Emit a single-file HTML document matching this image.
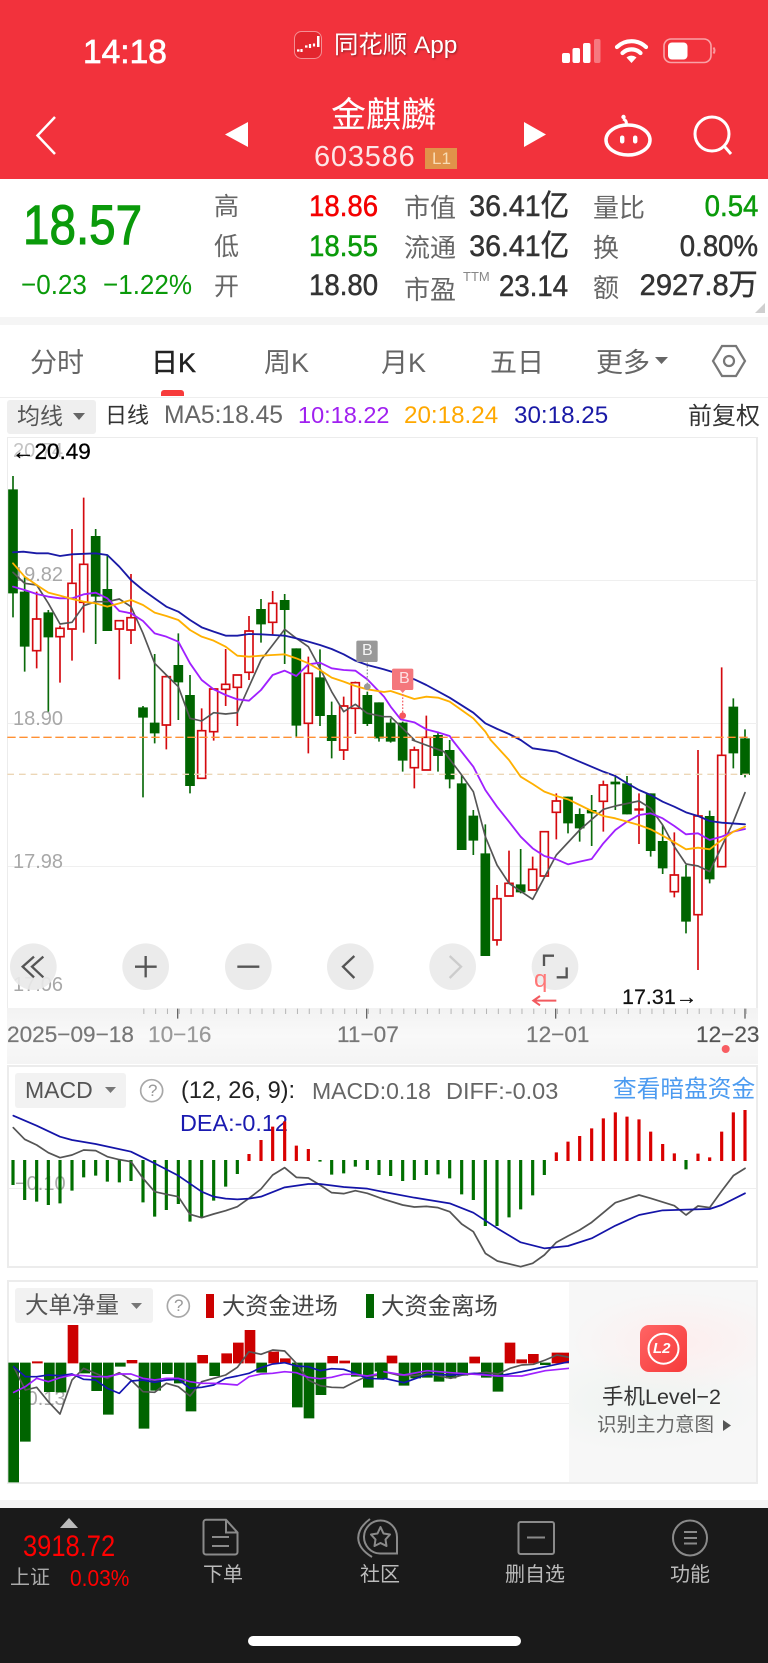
<!DOCTYPE html>
<html lang="zh"><head><meta charset="utf-8"><title>金麒麟</title>
<style>
html,body{margin:0;padding:0;background:#fff}
#p{position:relative;width:768px;height:1663px;overflow:hidden;background:#fff;font-family:"Liberation Sans","Noto Sans CJK SC",sans-serif;color:#333}
.t{position:absolute;white-space:nowrap;line-height:1}
.b{position:absolute}
.l{transform-origin:0 50%}.r{transform-origin:100% 50%}
.lb{color:#666;font-size:25px}
.v{font-size:30px;-webkit-text-stroke:.5px currentColor;transform:scaleX(.92)}
.g{color:#0a9a0a}.c{color:#fff}
.ax{color:#a8a8a8;font-size:20px}
.dt{color:#777;font-size:22.6px;-webkit-text-stroke:.2px currentColor}
svg{position:absolute;left:0;top:0}
.nav{color:#bbb;font-size:20px}
</style></head><body><div id="p">

<!-- header + info -->
<div class="b" style="left:0;top:0;width:768px;height:179px;background:#f2323c"></div>
<div class="b" style="left:0;top:317px;width:768px;height:8px;background:#f5f5f5"></div>
<div class="b" style="left:0;top:397px;width:768px;height:1px;background:#eee"></div>
<div class="b" style="left:161px;top:390px;width:23px;height:6px;border-radius:3px 3px 0 0;background:#f73b3b"></div>

<div class="t c" style="left:83px;top:36px;font-size:33.500px;-webkit-text-stroke:.7px #fff">14:18</div>
<div class="t c" style="left:334px;top:34px;font-size:24.400px;text-shadow:1px 1px 2px rgba(0,0,0,.4)">同花顺 App</div>
<div class="t c" style="left:331px;top:98px;font-size:35px">金麒麟</div>
<div class="t c" style="left:314px;top:143px;font-size:29px;letter-spacing:.8px;color:#fde6e7">603586</div>
<div class="b" style="left:425px;top:148px;width:32px;height:21px;background:#e0934a"></div>
<div class="t" style="left:432px;top:150px;font-size:17px;color:#f8dcb4">L1</div>

<!-- quote block -->
<div class="t g l" style="left:23px;top:197px;font-size:56px;-webkit-text-stroke:1.1px #0a9a0a;transform:scaleX(.85)">18.57</div>
<div class="t g l" style="left:21px;top:271px;font-size:28px;transform:scaleX(.93)">−0.23</div>
<div class="t g l" style="left:103px;top:271px;font-size:28px;transform:scaleX(.93)">−1.22%</div>

<div class="t lb" style="left:214px;top:195px">高</div>
<div class="t lb" style="left:214px;top:235px">低</div>
<div class="t lb" style="left:214px;top:275px">开</div>
<div class="t v r" style="right:390px;top:192px;color:#f40000">18.86</div>
<div class="t v r g" style="right:390px;top:232px">18.55</div>
<div class="t v r" style="right:390px;top:271px">18.80</div>

<div class="t lb" style="left:404px;top:195px;font-size:26px">市值</div>
<div class="t lb" style="left:404px;top:235px;font-size:26px">流通</div>
<div class="t lb" style="left:404px;top:277px;font-size:26px">市盈</div>
<div class="t" style="left:463px;top:270px;font-size:13px;color:#888">TTM</div>
<div class="t v r" style="right:199px;top:192px;font-size:30px;transform:scaleX(.95)">36.41亿</div>
<div class="t v r" style="right:199px;top:232px;font-size:30px;transform:scaleX(.95)">36.41亿</div>
<div class="t v r" style="right:200px;top:272px">23.14</div>

<div class="t lb" style="left:593px;top:195px;font-size:26px">量比</div>
<div class="t lb" style="left:593px;top:235px;font-size:26px">换</div>
<div class="t lb" style="left:593px;top:275px;font-size:26px">额</div>
<div class="t v r g" style="right:10px;top:192px">0.54</div>
<div class="t v r" style="right:10px;top:232px">0.80%</div>
<div class="t v r" style="right:10px;top:271px;font-size:30px;transform:scaleX(.97)">2927.8万</div>

<!-- tabs -->
<div class="t" style="left:30px;top:350px;font-size:27px;color:#666">分时</div>
<div class="t" style="left:151px;top:350px;font-size:27px;color:#222;-webkit-text-stroke:.4px #222">日K</div>
<div class="t" style="left:264px;top:350px;font-size:27px;color:#666">周K</div>
<div class="t" style="left:381px;top:350px;font-size:27px;color:#666">月K</div>
<div class="t" style="left:490px;top:350px;font-size:27px;color:#666">五日</div>
<div class="t" style="left:596px;top:350px;font-size:27px;color:#666">更多</div>

<!-- MA row -->
<div class="b" style="left:7px;top:400px;width:89px;height:34px;background:#efefef;border-radius:3px"></div>
<div class="t" style="left:17px;top:405px;font-size:23px;color:#555">均线</div>
<div class="t" style="left:105px;top:405px;font-size:22px;color:#333">日线</div>
<div class="t" style="left:164px;top:404px;font-size:24.600px;color:#666">MA5:18.45</div>
<div class="t" style="left:298px;top:404px;font-size:23.500px;color:#a020f0">10:18.22</div>
<div class="t" style="left:404px;top:404px;font-size:24.200px;color:#ffa800">20:18.24</div>
<div class="t" style="left:514px;top:404px;font-size:24.200px;color:#1a1aa6">30:18.25</div>
<div class="t" style="left:688px;top:405px;font-size:24px;color:#333">前复权</div>

<!-- chart frames -->
<div class="b" style="left:7px;top:437px;width:751px;height:571px;border:1px solid #ececec;border-width:1px 2px 0 1px;box-sizing:border-box"></div>
<div class="b" style="left:8px;top:580px;width:749px;height:1px;background:#efefef"></div>
<div class="b" style="left:8px;top:723px;width:749px;height:1px;background:#efefef"></div>
<div class="b" style="left:8px;top:866px;width:749px;height:1px;background:#efefef"></div>
<div class="b" style="left:7px;top:1008px;width:751px;height:56px;background:linear-gradient(#f2f2f2,#f9f9f9 50%,#f4f4f4)"></div>
<div class="b" style="left:7px;top:1065px;width:751px;height:203px;border:2px solid #ececec;box-sizing:border-box"></div>
<div class="b" style="left:9px;top:1188px;width:747px;height:1px;background:#eee"></div>
<div class="b" style="left:7px;top:1280px;width:751px;height:204px;border:2px solid #ececec;box-sizing:border-box"></div>
<div class="b" style="left:9px;top:1403px;width:747px;height:1px;background:#eee"></div>

<div class="t ax" style="left:13px;top:441px;color:#c4c4c4">20.74</div>
<div class="t ax" style="left:13px;top:565px">19.82</div>
<div class="t ax" style="left:13px;top:709px">18.90</div>
<div class="t ax" style="left:13px;top:852px">17.98</div>
<div class="t ax" style="left:13px;top:975px">17.06</div>
<div class="t ax" style="left:15px;top:1174px">−0.10</div>
<div class="t ax" style="left:15px;top:1389px">−0.13</div>

<div class="t dt" style="left:7px;top:1024px">2025−09−18</div>
<div class="t dt" style="left:148px;top:1024px;color:#999">10−16</div>
<div class="t dt" style="left:337px;top:1024px">11−07</div>
<div class="t dt" style="left:526px;top:1024px">12−01</div>
<div class="t dt" style="left:696px;top:1024px;color:#555">12−23</div>

<div class="b" style="left:15px;top:1073px;width:111px;height:35px;background:#f2f2f2;border-radius:3px"></div>
<div class="t" style="left:25px;top:1079px;font-size:23px;color:#555">MACD</div>
<div class="t" style="left:181px;top:1080px;font-size:23.600px;color:#222">(12, 26, 9):</div>
<div class="t" style="left:312px;top:1080px;font-size:23px;color:#666">MACD:0.18</div>
<div class="t" style="left:446px;top:1080px;font-size:23.500px;color:#666">DIFF:-0.03</div>
<div class="t" style="left:613px;top:1079px;font-size:23.700px;color:#4c9bf0">查看暗盘资金</div>
<div class="t" style="left:180px;top:1112px;font-size:23.400px;color:#1a1ab0">DEA:-0.12</div>

<div class="b" style="left:15px;top:1288px;width:138px;height:35px;background:#f2f2f2;border-radius:3px"></div>
<div class="t" style="left:25px;top:1294px;font-size:23.500px;color:#555">大单净量</div>
<div class="b" style="left:206px;top:1294px;width:8px;height:24px;background:#cc0000"></div>
<div class="t" style="left:222px;top:1295px;font-size:23.200px;color:#444">大资金进场</div>
<div class="b" style="left:366px;top:1294px;width:8px;height:24px;background:#006400"></div>
<div class="t" style="left:381px;top:1295px;font-size:23.400px;color:#444">大资金离场</div>

<!-- charts: coordinates are at 3x scale -->
<svg width="768" height="1663" viewBox="0 0 2304 4989" fill="none">
<!-- ticks -->
<path d="M430 3034H2240" stroke="#b5b5b5" stroke-width="16" stroke-dasharray="3 32.45"/>
<path d="M533 3026v30M1100 3026v30M1667 3026v30M2235 3026v30" stroke="#666" stroke-width="4"/>

<g transform="translate(0,1260)">
<path stroke="#0a6a0a" stroke-width="5" d="M39 168V592M74 470V755M145 570V875M287 327V672M322 405V633M429 858V1132M464 702V970M535 640V900M570 765V1120M783 537V668M854 522V732M889 685V950M960 688V918M995 845V1015M1102 815V918M1137 847V965"/>
<path stroke="#006400" stroke-width="29" d="M39 208V520M74 515V680M145 577V652M287 348V530M322 507V633M429 862V893M464 908V940M535 735V787M570 825V1098M783 567V613M854 540V570M889 685V917M960 772V888M995 885V963M1102 825V912M1137 847V955"/>
<path stroke="#d40a0f" stroke-width="5" d="M110 515V745M180 617V788M216 327V722M251 233V638M358 600V778M393 462V672M499 765V988M605 865V1075M641 805V962M677 687V858M712 765V918M747 588V780M818 513V645M925 710V1000M1031 830V1020M1066 785V942"/>
<path stroke="#d40a0f" stroke-width="5" fill="#fff" d="M98 597h24V692h-24zM168 625h24V650h-24zM204 490h24V627h-24zM239 433h24V547h-24zM346 602h24V627h-24zM381 593h24V630h-24zM487 770h24V915h-24zM593 932h24V1075h-24zM629 807h24V935h-24zM665 793h24V808h-24zM700 765h24V802h-24zM735 633h24V757h-24zM806 550h24V607h-24zM913 760h24V910h-24zM1019 858h24V990h-24zM1054 788h24V865h-24z"/>
</g>
<g transform="translate(1152,1260)">
<path stroke="#0a6a0a" stroke-width="5" d="M20 895V968M56 905V1055M162 935V1055M197 960V1105M233 1065V1290M268 1170V1305M304 1213V1608M410 1287V1420M552 1130V1240M587 1165V1265M623 1125V1278M694 1070V1170M729 1068V1183M800 1120V1310M836 1215V1362M906 1335V1540M977 1172V1390M1048 835V1045M1083 928V1072"/>
<path stroke="#006400" stroke-width="29" d="M20 908V965M56 908V1022M162 945V1008M197 990V1078M233 1090V1290M268 1187V1262M304 1300V1608M410 1393V1417M552 1130V1210M587 1182V1225M623 1170V1180M694 1085V1093M729 1090V1183M800 1120V1293M836 1263V1345M906 1370V1505M977 1188V1378M1048 860V1000M1083 955V1065"/>
<path stroke="#d40a0f" stroke-width="5" d="M91 980V1105M127 887V1050M339 1395V1577M375 1292V1428M446 1310V1410M481 1235V1368M517 1120V1258M658 1082V1235M765 1120V1272M871 1237V1432M942 990V1650M1013 742V1340"/>
<path stroke="#d40a0f" stroke-width="5" fill="#fff" d="M79 990h24V1043h-24zM115 952h24V1050h-24zM327 1436h24V1560h-24zM363 1390h24V1428h-24zM434 1348h24V1410h-24zM469 1235h24V1368h-24zM505 1143h24V1177h-24zM646 1095h24V1144h-24zM859 1365h24V1415h-24zM930 1188h24V1484h-24zM1001 1006h24V1340h-24z"/>
<path stroke="#d40a0f" stroke-width="7" d="M751 1168.500h28"/>
</g>

<!-- MA lines -->
<g transform="translate(0,1260)" stroke-width="5.500" stroke-linejoin="round" stroke-linecap="round">
<polyline stroke="#555" stroke-width="5" points="39,457 74,490 110,495 145,550 180,612 216,607 251,557 287,545 322,545 358,537 393,560 429,640 464,730 499,765 535,800 570,895 605,903 641,878 677,882 712,878 747,800 783,720 818,675 854,628 889,655 925,680 960,745 995,815 1031,875 1066,853 1102,880 1152,890 1172,890 1208,925 1243,960"/>
<polyline stroke="#a020ff" points="39,500 74,510 110,522 145,530 180,535 216,535 251,523 287,518 322,535 358,573 393,580 429,603 464,640 499,650 535,665 570,730 605,780 641,808 677,825 712,838 747,842 783,810 818,765 854,752 889,768 925,733 960,728 995,745 1031,750 1066,752 1102,778 1152,830 1172,860 1202,898 1243,907 1279,928 1314,937 1349,948 1357,960"/>
<polyline stroke="#ffb000" points="39,430 74,470 110,495 145,518 180,527 216,537 251,545 287,550 322,560 358,550 393,540 429,555 464,578 499,588 535,600 570,630 605,650 641,662 677,680 712,707 747,710 783,707 818,705 854,703 889,715 925,730 960,750 995,773 1031,785 1066,798 1102,808 1152,816 1172,813 1208,825 1243,837 1279,830 1314,833 1349,845 1420,895 1456,935 1472,960"/>
<polyline stroke="#1a1aa6" points="39,397 70,395 110,400 145,400 180,408 216,403 287,400 322,405 358,440 393,480 429,510 464,535 499,560 535,575 570,600 605,622 641,635 677,647 712,647 747,642 783,643 818,645 854,647 889,655 925,665 960,675 995,687 1031,703 1066,722 1102,735 1152,748 1208,765 1243,778 1279,795 1349,833 1420,878 1456,910 1492,927 1527,942 1562,960"/>
</g>
<g transform="translate(1152,2220)" stroke-width="5.500" stroke-linejoin="round" stroke-linecap="round">
<polyline stroke="#555" stroke-width="5" points="85,0 180,35 233,105 268,155 304,290 339,375 375,430 446,478 517,345 587,270 658,208 694,198 765,183 800,205 836,255 871,320 906,372 942,378 977,395 1013,320 1048,245 1083,158"/>
<polyline stroke="#a020ff" points="205,0 268,80 304,150 339,200 375,245 410,290 446,325 481,348 517,358 552,373 587,365 623,357 658,310 694,270 729,245 765,225 800,220 836,235 871,258 906,283 942,280 977,300 1013,290 1048,275 1083,267"/>
<polyline stroke="#ffb000" points="320,0 375,60 410,110 446,132 481,155 517,168 552,178 587,195 623,213 658,228 694,235 729,245 765,255 800,268 836,287 871,307 906,328 942,323 977,328 1013,300 1048,275 1083,260"/>
<polyline stroke="#1a1aa6" points="410,0 446,25 517,35 587,65 658,95 694,108 729,130 765,150 800,165 836,185 871,200 906,217 942,228 977,243 1013,248 1083,253"/>
</g>

<!-- reference lines -->
<path d="M22 2212H2254" stroke="#ff9033" stroke-width="4" stroke-dasharray="25 11"/>
<path d="M22 2323H2254" stroke="#ecd6b6" stroke-width="4" stroke-dasharray="20 15"/>

<!-- B markers -->
<g transform="translate(0,1260)">
<path d="M1102 728V798" stroke="#999" stroke-width="4" stroke-dasharray="5 5"/>
<rect x="1069" y="662" width="64" height="64" rx="5" fill="#999"/><circle cx="1102" cy="800" r="10" fill="#999"/>
</g>
<g transform="translate(1152,1260)">
<path d="M56 812V878" stroke="#f56a70" stroke-width="4" stroke-dasharray="5 5"/>
<path d="M29 746h54a5 5 0 0 1 5 5v54a5 5 0 0 1-5 5h-19l-8 9-8-9h-19a5 5 0 0 1-5-5v-54a5 5 0 0 1 5-5z" fill="#f4777c"/><circle cx="56" cy="887" r="10" fill="#f5575c"/>
</g>

<!-- MACD bars -->
<g transform="translate(0,3180)" stroke-width="9.500">
<path stroke="#006f00" d="M39 300V375M74 300V420M110 300V425M145 300V435M180 300V430M216 300V392M251 300V352M287 300V347M322 300V365M358 300V367M393 300V363M429 300V427M464 300V470M499 300V450M535 300V432M570 300V485M605 300V473M641 300V422M677 300V380M712 300V342M960 300V305M995 300V344M1031 300V340M1066 300V320M1102 300V330M1137 300V345"/>
<path stroke="#d90000" d="M747 303V282M783 303V240M818 303V200M854 303V184M889 303V257M925 303V267"/>
<g stroke-width="5.200" stroke-linejoin="round" stroke-linecap="round">
<polyline stroke="#555" points="40,203 74,238 110,255 145,278 180,293 216,285 251,270 287,272 322,290 358,299 393,305 429,355 464,395 499,403 535,410 570,463 605,473 641,462 677,452 712,440 747,415 783,387 818,345 854,323 889,352 925,354 960,375 995,398 1031,401 1066,392 1102,400 1152,418"/>
<polyline stroke="#1414a8" points="40,167 110,197 180,230 216,240 287,252 393,275 464,310 535,347 605,395 641,410 677,416 712,418 747,416 783,410 854,382 925,372 960,372 1031,381 1102,386 1152,396"/>
</g></g>
<g transform="translate(1152,3180)" stroke-width="9.500">
<path stroke="#006f00" d="M20 300V348M56 300V363M91 300V360M127 300V345M162 300V343M197 300V355M233 300V403M268 300V420M304 300V498M339 300V498M375 300V472M410 300V448M446 300V406M481 300V345M906 300V328"/>
<path stroke="#d90000" d="M517 303V277M552 303V245M587 303V228M623 303V205M658 303V175M694 303V157M729 303V170M765 303V178M800 303V215M836 303V252M871 303V280M942 303V281M977 303V292M1013 303V215M1048 303V157M1083 303V150"/>
<g stroke-width="5.200" stroke-linejoin="round" stroke-linecap="round">
<polyline stroke="#555" points="0,418 56,435 91,441 127,439 162,443 197,455 233,492 268,515 304,580 340,603 410,620 446,610 481,585 517,547 552,528 587,510 623,487 658,458 694,428 765,405 800,415 871,437 906,465 942,438 977,443 1013,393 1048,347 1083,325"/>
<polyline stroke="#1414a8" points="0,396 91,413 197,430 268,458 340,505 410,547 481,565 552,558 623,535 694,497 765,465 836,451 906,449 977,447 1013,435 1083,400"/>
</g></g>

<!-- net flow bars -->
<g transform="translate(0,3810)" stroke-width="32">
<path stroke="#006400" d="M41 278V637M76 278V515M148 278V366M183 278V367M254 278V310M290 278V363M325 278V434M361 278V290M432 278V476M467 278V362M502 278V312M538 278V340M573 278V424M644 278V318M785 278V308M892 278V412M927 278V445M963 278V375M1069 278V320M1105 278V353M1140 278V305"/>
<path stroke="#cc0000" d="M112 280V274M219 280V165M396 280V270M608 280V255M680 280V250M715 280V218M750 280V180M821 280V245M856 280V265M998 280V258M1034 280V272"/>
<g stroke-width="5" stroke-linejoin="round" stroke-linecap="round">
<polyline stroke="#555" points="41,290 76,360 110,352 145,395 180,432 216,330 251,295 287,310 322,325 358,308 393,330 429,365 464,367 499,340 535,350 570,378 605,335 641,325 677,315 712,292 747,245 783,253 818,240 854,243 889,280 925,330 960,347 995,352 1031,353 1066,335 1102,318 1152,315"/>
<polyline stroke="#1414b0" points="41,290 76,320 110,320 145,315 180,317 216,312 251,328 287,330 322,355 358,370 393,333 429,330 464,337 499,330 535,328 570,355 605,352 641,345 677,325 712,318 747,310 783,293 818,282 854,278 889,288 925,290 960,302 995,296 1031,298 1066,310 1102,325 1152,327"/>
<polyline stroke="#a020ff" points="41,367 76,350 110,325 145,335 180,323 216,315 251,317 287,320 322,320 358,312 393,312 429,325 464,330 499,325 535,325 570,335 605,340 641,340 677,342 712,345 747,320 783,312 818,310 854,305 889,308 925,322 960,326 995,322 1031,313 1066,313 1102,318 1152,308"/>
</g></g>
<g transform="translate(1152,3810)" stroke-width="32">
<path stroke="#006400" d="M-5 278V325M60 278V347M95 278V325M130 278V323M165 278V335M201 278V325M236 278V317M307 278V323M342 278V365M484 278V285"/>
<path stroke="#cc0000" d="M24 280V257M272 280V260M378 280V218M413 280V268M448 280V252M519 280V248"/>
<path stroke="#cc0000" stroke-width="22" d="M545 280V248"/>
<g stroke-width="5" stroke-linejoin="round" stroke-linecap="round">
<polyline stroke="#555" points="0,305 40,315 95,317 130,310 200,325 236,315 307,307 342,312 378,295 413,285 448,283 484,270 519,255 556,262"/>
<polyline stroke="#1414b0" points="0,325 60,338 130,313 200,315 272,310 342,318 413,305 484,290 556,275"/>
<polyline stroke="#a020ff" points="0,305 60,315 130,302 200,308 272,313 342,318 413,318 484,302 556,295"/>
</g></g>

<!-- overlay buttons -->
<g transform="translate(0,2220)">
<g fill="#e9e9e9" fill-opacity=".9">
<circle cx="100" cy="680" r="70"/><circle cx="437" cy="680" r="70"/><circle cx="745" cy="680" r="70"/><circle cx="1051" cy="680" r="70"/>
<circle cx="1358" cy="680" r="70" fill-opacity=".85"/><circle cx="1665" cy="680" r="70" fill-opacity=".85"/>
</g>
<g stroke="#555" stroke-width="7">
<path d="M102 650L68 680L102 712M130 650L96 680L130 712"/>
<path d="M405 680H470M437 648V712"/>
<path d="M712 680H778"/>
<path d="M1063 648L1029 680L1063 714"/>
<path d="M1349 648L1383 680L1349 714" stroke="#ccc"/>
<path d="M1632 678V647H1662M1700 682V712H1670"/>
</g>
</g>
<!-- question icons -->
<circle cx="455" cy="3272" r="33" stroke="#a8a8a8" stroke-width="5"/>
<circle cx="535" cy="3918" r="33" stroke="#a8a8a8" stroke-width="5"/>
<!-- low marker arrow -->
<g transform="translate(1152,2220)"><path d="M517 782H448M468 768L448 782L468 796" stroke="#f25a5f" stroke-width="6"/></g>
</svg>

<div class="t" style="left:362px;top:643px;font-size:16px;color:#f5f5f5">B</div>
<div class="t" style="left:399px;top:671px;font-size:16px;color:#fde0e2">B</div>
<div class="t" style="left:148px;top:1082px;font-size:17px;color:#999">?</div>
<div class="t" style="left:174px;top:1297px;font-size:17px;color:#999">?</div>
<div class="t" style="left:534px;top:968px;font-size:24px;color:#f77">q</div>
<div class="t" style="left:12px;top:441px;font-size:22.500px;color:#000;-webkit-text-stroke:.3px #000">←20.49</div>
<div class="t" style="left:622px;top:987px;font-size:21.500px;color:#111;-webkit-text-stroke:.2px #111">17.31→</div>

<!-- ad panel -->
<div class="b" style="left:569px;top:1282px;width:187px;height:200px;background:radial-gradient(ellipse 110px 50px at 60% 30%,#fdeeee,rgba(253,238,238,0)),radial-gradient(ellipse 120px 50px at 40% 60%,#eef3f0,rgba(238,243,240,0)),#f7f7f7"></div>
<div class="b" style="left:640px;top:1325px;width:47px;height:47px;border-radius:9px;background:linear-gradient(135deg,#ff6464,#f63a3a)"></div>
<div class="t" style="left:602px;top:1387px;font-size:21.500px;color:#333">手机Level−2</div>
<div class="t" style="left:597px;top:1416px;font-size:19.500px;color:#666">识别主力意图</div>
<div class="t" style="left:653px;top:1341px;font-size:15px;font-weight:700;font-style:italic;color:#fff">L2</div>

<!-- bottom bar -->
<div class="b" style="left:0;top:1500px;width:768px;height:8px;background:#f4f4f4"></div>
<div class="b" style="left:0;top:1508px;width:768px;height:155px;background:#1a1a1a"></div>
<div class="t l" style="left:23px;top:1532px;font-size:30px;color:#f00;transform:scaleX(.85)">3918.72</div>
<div class="t" style="left:10px;top:1568px;font-size:20px;color:#aaa">上证</div>
<div class="t l" style="left:70px;top:1567px;font-size:23px;color:#f00;transform:scaleX(.91)">0.03%</div>
<div class="t nav" style="left:203px;top:1565px">下单</div>
<div class="t nav" style="left:360px;top:1565px">社区</div>
<div class="t nav" style="left:505px;top:1565px">删自选</div>
<div class="t nav" style="left:670px;top:1565px">功能</div>
<div class="b" style="left:248px;top:1636px;width:273px;height:10px;border-radius:5px;background:#fff"></div>

<!-- icons, real-pixel coordinates -->
<svg width="768" height="1663" viewBox="0 0 768 1663" fill="none">
<!-- app logo -->
<rect x="294.500" y="31.500" width="27" height="27" rx="7" fill="#e3262e" stroke="#f48f94"/>
<path d="M297 50.500h2.500M301.500 49v3M305 46.500h2.500M310 44v4M314 43.500v3" stroke="#fff" stroke-width="2.200"/>
<rect x="317" y="36" width="2.500" height="11" fill="#fff"/>
<!-- signal -->
<rect x="562" y="53" width="8" height="10" rx="2" fill="#fff"/>
<rect x="572.500" y="48" width="7.500" height="15" rx="2" fill="#fff"/>
<rect x="583" y="43" width="7.500" height="20" rx="2" fill="#fff"/>
<rect x="594" y="39" width="6.500" height="24" rx="2" fill="#fff" fill-opacity=".35"/>
<!-- wifi -->
<path d="M617 47A21 21 0 0 1 646 47" stroke="#fff" stroke-width="4.200" stroke-linecap="round"/>
<path d="M622.500 53A13 13 0 0 1 640.500 53" stroke="#fff" stroke-width="4.200" stroke-linecap="round"/>
<path d="M626.500 57.500A7.500 7.500 0 0 1 636.500 57.500L631.500 63z" fill="#fff"/>
<!-- battery -->
<rect x="664" y="39" width="47" height="23.500" rx="7" stroke="#fff" stroke-opacity=".55" stroke-width="1.600"/>
<rect x="668" y="42.500" width="19.500" height="17" rx="4" fill="#fff"/>
<path d="M713.500 47.500q2 3 0 6" stroke="#fff" stroke-opacity=".5" stroke-width="2"/>
<!-- nav -->
<path d="M55 117L37.500 135.500L55 154" stroke="#fff" stroke-width="2.500"/>
<path d="M248 122V147L225 134.500z" fill="#fff"/>
<path d="M524 122V147L546 134.500z" fill="#fff"/>
<!-- robot -->
<ellipse cx="628" cy="140" rx="22" ry="15" stroke="#fff" stroke-width="3.500"/>
<path d="M626 125c1-3 0-5-3-6" stroke="#fff" stroke-width="3"/>
<circle cx="623.500" cy="117" r="2.200" fill="#fff"/>
<rect x="620" y="135.500" width="4.400" height="8" rx="2.200" fill="#fff"/>
<rect x="633" y="135.500" width="4.400" height="8" rx="2.200" fill="#fff"/>
<!-- search -->
<circle cx="712" cy="134" r="17" stroke="#fff" stroke-width="3"/>
<path d="M724.500 146.500L731 154" stroke="#fff" stroke-width="3"/>
<path d="M755 313h10v-10z" fill="#cfcfcf"/>
<!-- tab dropdown + hex -->
<path d="M655 357h13l-6.500 7z" fill="#666"/>
<path d="M722 346h14l9 15l-9 15h-14l-9-15z" stroke="#777" stroke-width="2.200"/>
<circle cx="729" cy="361" r="5" stroke="#777" stroke-width="2.200"/>
<path d="M73 413h12l-6 7z" fill="#666"/>
<path d="M105 1087h11l-5.500 6z" fill="#777"/>
<path d="M131 1303h11l-5.500 6z" fill="#777"/>
<!-- L2 ring -->
<circle cx="663.500" cy="1348.700" r="15" stroke="#fff" stroke-width="2"/>
<path d="M723 1420l8 5.500l-8 5.500z" fill="#555"/>
<circle cx="725.700" cy="1049" r="4" fill="#f85d62"/>
<!-- bottom nav icons -->
<path d="M60 1528l9-10l9 10z" fill="#bbb"/>
<path d="M206 1519.800H226L237.500 1532.500V1552A2.500 2.500 0 0 1 235 1554.500H206A2.500 2.500 0 0 1 203.500 1552V1522.300A2.500 2.500 0 0 1 206 1519.800zM226 1520V1532.500H237.500M212 1537H229M212 1546H229" stroke="#8a8a8a" stroke-width="2"/>
<path d="M397 1553.500H380A16.500 16.500 0 1 1 397 1537zM370 1519C354 1531 354 1546 372 1557" stroke="#8a8a8a" stroke-width="2"/>
<path d="M380.500 1527L383.500 1533.500L390 1534.500L385.500 1539.500L386.500 1546L380.500 1543L374.500 1546L375.500 1539.500L371 1534.500L377.500 1533.500z" stroke="#8a8a8a" stroke-width="2" stroke-linejoin="round"/>
<rect x="518.500" y="1522" width="35.500" height="32" rx="2" stroke="#8a8a8a" stroke-width="2"/>
<path d="M527 1537.500H545" stroke="#8a8a8a" stroke-width="2"/>
<ellipse cx="690" cy="1538" rx="17" ry="17.500" stroke="#8a8a8a" stroke-width="2"/>
<path d="M684 1532H697M684 1538H697M684 1543.500H697" stroke="#8a8a8a" stroke-width="2"/>
</svg>
</div></body></html>
